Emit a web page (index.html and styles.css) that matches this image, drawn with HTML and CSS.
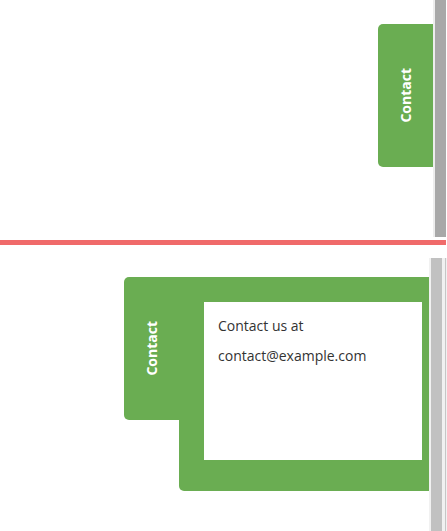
FILE: index.html
```html
<!DOCTYPE html>
<html>
<head>
<meta charset="utf-8">
<link rel="stylesheet" href="styles.css">
</head>
<body>
<section class="state state-closed">
  <div class="viewport">
    <div class="tab"><span class="tab-label">Contact</span></div>
  </div>
  <div class="scrollbar dark"><div class="thumb"></div></div>
</section>
<div class="divider"></div>
<section class="state state-open">
  <div class="viewport">
    <div class="panel">
      <div class="tab"><span class="tab-label">Contact</span></div>
      <div class="panel-body">
        <div class="panel-content">
          <p>Contact us at</p>
          <p>contact@example.com</p>
        </div>
      </div>
    </div>
  </div>
  <div class="scrollbar light"><div class="thumb"></div></div>
</section>
</body>
</html>
```
FILE: styles.css
```css
html, body {
  margin: 0;
  padding: 0;
  background: #ffffff;
  width: 447px;
  height: 531px;
  overflow: hidden;
  font-family: "Open Sans", "Liberation Sans", sans-serif;
}

.state {
  display: flex;
}

.state-closed {
  height: 240px;
  align-items: flex-start;
}

.state-open {
  height: 273px;
  margin-top: 13px;
  align-items: stretch;
}

.viewport {
  flex: 1;
  display: flex;
  justify-content: flex-end;
  align-items: flex-start;
  overflow: hidden;
}

.state-closed .viewport {
  padding-top: 24px;
}

.state-open .viewport {
  padding-top: 19px;
}

.tab {
  width: 55px;
  height: 143px;
  flex: none;
  background: #6aad52;
  border-radius: 5px 0 0 5px;
  display: flex;
  align-items: center;
  justify-content: center;
}

.tab-label {
  writing-mode: vertical-rl;
  transform: rotate(180deg);
  color: #ffffff;
  font-weight: 700;
  font-size: 14px;
  line-height: 1;
}

.panel {
  display: flex;
  align-items: flex-start;
}

.panel-body {
  width: 250px;
  height: 214px;
  box-sizing: border-box;
  background: #6aad52;
  border-radius: 0 0 0 5px;
  padding: 25px 7px 31px 25px;
}

.panel-content {
  background: #ffffff;
  height: 100%;
  box-sizing: border-box;
  padding: 9px 14px;
  color: #333333;
  font-size: 14px;
}

.panel-content p {
  margin: 0;
  line-height: 30px;
}

.divider {
  height: 5px;
  width: 446px;
  background: #f06a6a;
}

.scrollbar {
  flex: none;
  box-sizing: border-box;
}

.scrollbar.dark {
  width: 14px;
  height: 237px;
  background: #ffffff;
  border-left: 2px solid #ededed;
}

.scrollbar.dark .thumb {
  width: 11px;
  height: 100%;
  background: #a8a8a8;
}

.scrollbar.light {
  width: 18px;
  background: #f1f1f1;
  padding-left: 2px;
  display: flex;
}

.scrollbar.light .thumb {
  width: 11px;
  height: 100%;
  background: #c1c1c1;
  margin-right: 3px;
}

.scrollbar.light::after {
  content: "";
  width: 1px;
  background: #c6c6c6;
  margin-right: 1px;
}
```
